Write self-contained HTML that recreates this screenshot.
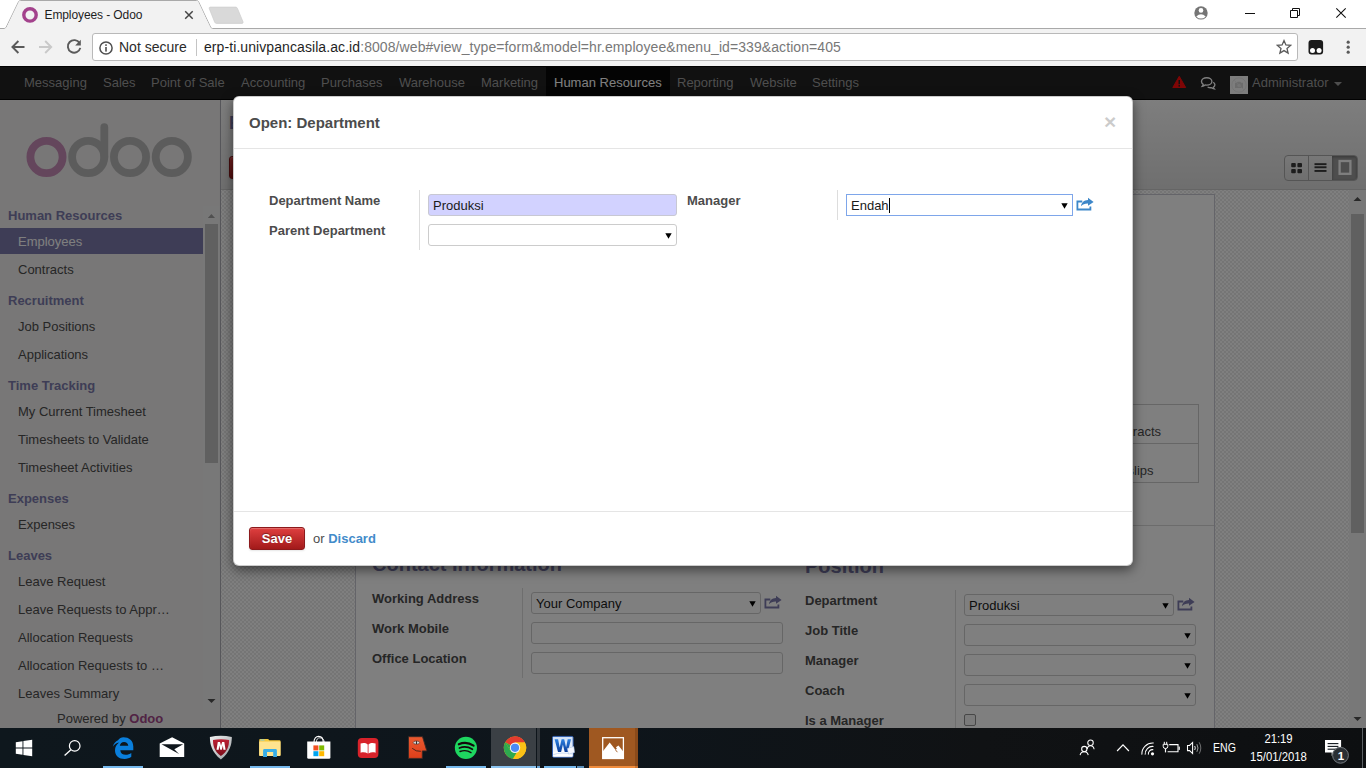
<!DOCTYPE html>
<html lang="en">
<head>
<meta charset="utf-8">
<title>Employees - Odoo</title>
<style>
*{box-sizing:border-box;margin:0;padding:0}
html,body{width:1366px;height:768px;overflow:hidden;background:#fff;font-family:"Liberation Sans",Arial,sans-serif;font-size:13px;color:#4c4c4c}
.abs,.a{position:absolute}
.nw{white-space:nowrap}
/* ---------- Chrome window ---------- */
#tabstrip{position:absolute;left:0;top:0;width:1366px;height:29px;background:#fff}
#tabstrip .line{position:absolute;left:260px;top:28px;width:1106px;height:1px;background:#a9a9a9}
#tabtitle{position:absolute;left:44.500px;top:8px;font-size:12px;line-height:14px;color:#1e1e1e;white-space:nowrap;letter-spacing:-0.1px}
#toolbar{position:absolute;left:0;top:29px;width:1366px;height:37px;background:#f2f2f2}
#omni{position:absolute;left:92px;top:4px;width:1206px;height:28px;background:#fff;border:1px solid #b9b9b9;border-radius:3px}
#omni .t{position:absolute;top:5px;font-size:14px;white-space:nowrap;line-height:16px}
/* ---------- Odoo page (origin 0,66) ---------- */
#page{position:absolute;left:0;top:66px;width:1366px;height:662px;overflow:hidden;background:#fff}
#nav{position:absolute;left:0;top:0;width:1366px;height:34px;background:#222;box-shadow:inset 0 1px 0 #050505,inset 0 -1px 0 #050505}
#nav .m{position:absolute;top:0;height:34px;line-height:33px;padding:0 8px;color:#9d9d9d;font-size:13px;white-space:nowrap}
#nav .m.on{background:#080808;color:#fff}
#side{position:absolute;left:0;top:34px;width:221px;height:628px;background:#f0eeee;border-right:1px solid #afafb6}
.h{position:absolute;left:8px;font-weight:bold;color:#7c7bad;font-size:13px;line-height:16px;white-space:nowrap}
.l{position:absolute;left:0;width:203px;height:26px;line-height:26px;padding-left:18px;color:#4c4c4c;font-size:13px;white-space:nowrap}
.l.on{background:#7c7bad;color:#fff}
#hdr{position:absolute;left:221px;top:34px;width:1145px;height:90px;background:linear-gradient(#fcfcfc,#dedede);border-bottom:1px solid #cacaca}
#sheetbg{position:absolute;left:221px;top:124px;width:1128px;height:538px;background-color:#fefefe;
 background-image:linear-gradient(45deg,#eaeaea 25%,transparent 25%,transparent 75%,#eaeaea 75%),linear-gradient(45deg,#eaeaea 25%,transparent 25%,transparent 75%,#eaeaea 75%);background-size:4px 4px;background-position:1px 1px,3px 3px}
#sheet{position:absolute;left:355px;top:128px;width:860px;height:700px;background:#fff;border:1px solid #c8c8d3}
.lbl{position:absolute;font-weight:bold;color:#4c4c4c;font-size:13px;line-height:16px;white-space:nowrap}
.inp{position:absolute;height:22px;background:#fff;border:1px solid #ccc;border-radius:3px;font-size:13px;line-height:22px;padding-left:4px;color:#1a1a1a;white-space:nowrap}
.inp .dd{position:absolute;right:4px;top:7.700px}
.vs{position:absolute;background:#ddd;width:1px}
#overlay{position:absolute;left:0;top:0;width:1366px;height:662px;background:rgba(0,0,0,.5)}
/* ---------- Modal (origin 234,97 page px) ---------- */
#modal{position:absolute;left:233px;top:30px;width:900px;height:470px;background:#fff;border:1px solid rgba(0,0,0,.2);border-radius:6px;box-shadow:0 4px 12px rgba(0,0,0,.5)}
.btn-red{position:absolute;border:1px solid #8c1a1c;border-radius:3px;background:linear-gradient(#df3f3f,#a21a1a);color:#fff;font-weight:bold;font-size:13px;line-height:21px;text-align:center;text-shadow:0 -1px 1px rgba(0,0,0,.4);box-shadow:0 1px 2px rgba(0,0,0,.1),inset 0 1px 1px rgba(255,255,255,.25)}
/* ---------- Taskbar ---------- */
#task{position:absolute;left:0;top:728px;width:1366px;height:40px;background:linear-gradient(90deg,#0e171d 0%,#0e151b 45%,#101214 72%,#0d0f11 100%);color:#fff;font-size:12px;overflow:hidden}
#task .ul{position:absolute;top:38px;height:2px;background:#76b9ed}
#task .tx{position:absolute;color:#fff;font-size:12px;line-height:14px;white-space:nowrap}
</style>
</head>
<body>
<!-- CHROME WINDOW FRAME -->
<div id="tabstrip">
  <div class="line"></div>
  <svg class="a" style="left:0;top:0" width="260" height="29" viewBox="0 0 260 29">
    <path d="M0 28.500 H4.300 Q5.600 28.400 6.200 27.200 L18.600 1.700 Q19.200 0.500 20.500 0.500 L196.600 0.500 Q197.900 0.500 198.500 1.700 L210.600 27.200 Q211.200 28.400 212.500 28.500 H260" fill="none" stroke="#a9a9a9" stroke-width="1"/>
    <path d="M5.300 29 L6.400 27.400 L18.900 1.800 Q19.300 1 20.500 1 L196.600 1 Q197.800 1 198.200 1.800 L210.400 27.400 L211.500 29Z" fill="#f2f2f2"/>
    <path d="M210.300 7.100 L235.600 7.100 Q236.900 7.100 237.400 8.300 L243 21.800 Q243.600 23.400 242 23.400 L216.600 23.400 Q215.300 23.400 214.700 22.200 L209.300 8.700 Q208.800 7.100 210.300 7.100Z" fill="#d9d9d9" stroke="#cdcdcd" stroke-width="0.700"/>
    <circle cx="30" cy="14.950" r="6.200" fill="none" stroke="#a3428c" stroke-width="3.400"/>
    <path d="M185.200 11.200 L192.700 18.700 M192.700 11.200 L185.200 18.700" stroke="#454545" stroke-width="1.500" fill="none"/>
  </svg>
  <div id="tabtitle">Employees - Odoo</div>
  <svg class="a" style="left:1180px;top:0" width="186" height="28" viewBox="1180 0 186 28">
    <circle cx="1201" cy="12.900" r="6.700" fill="#757575"/>
    <circle cx="1201" cy="10.400" r="2.300" fill="#fff"/>
    <path d="M1196.300 16.400 Q1201 12.200 1205.700 16.400 Q1203.800 18.600 1201 18.600 Q1198.200 18.600 1196.300 16.400Z" fill="#fff"/>
    <path d="M1245 13.500 H1255" stroke="#111" stroke-width="1"/>
    <path d="M1290.500 10.500 H1297.500 V17.500 H1290.500Z M1292.500 10.500 V8.500 H1299.500 V15.500 H1297.500" fill="none" stroke="#111" stroke-width="1"/>
    <path d="M1336.300 8.300 L1345.700 17.700 M1345.700 8.300 L1336.300 17.700" stroke="#111" stroke-width="1.100" fill="none"/>
  </svg>
</div>
<div id="toolbar">
  <svg class="a" style="left:0;top:0" width="93" height="37" viewBox="0 29 93 37">
    <path d="M24.500 47 H12.600 M18.400 41 L12.400 47 L18.400 53" fill="none" stroke="#5a5a5a" stroke-width="1.900"/>
    <path d="M39 47 H51 M45.200 41 L51.200 47 L45.200 53" fill="none" stroke="#c9c9c9" stroke-width="1.900"/>
    <path d="M79.600 43.200 A6.300 6.300 0 1 0 80.300 47.900" fill="none" stroke="#5a5a5a" stroke-width="1.900"/>
    <path d="M80.800 39.800 V45.400 H75.200Z" fill="#5a5a5a"/>
  </svg>
  <div id="omni">
    <svg class="a" style="left:5px;top:6px" width="16" height="16" viewBox="0 0 16 16"><circle cx="8" cy="8" r="6.100" fill="none" stroke="#4f4f4f" stroke-width="1.500"/><rect x="7.200" y="7" width="1.600" height="4.600" fill="#4f4f4f"/><rect x="7.200" y="4.300" width="1.600" height="1.600" fill="#4f4f4f"/></svg>
    <span class="t" style="left:26px;color:#2b2b2b">Not secure</span>
    <span class="a" style="left:103px;top:5px;width:1px;height:17px;background:#c4c4c4"></span>
    <span class="t" style="left:111px;color:#1f1f1f;letter-spacing:.08px">erp-ti.univpancasila.ac.id<span style="color:#787878">:8008/web#view_type=form&amp;model=hr.employee&amp;menu_id=339&amp;action=405</span></span>
    <svg class="a" style="left:1183px;top:5px" width="16" height="16" viewBox="0 0 16 16"><path d="M8 1.600 L9.900 6 L14.600 6.400 L11 9.500 L12.100 14.100 L8 11.600 L3.900 14.100 L5 9.500 L1.400 6.400 L6.100 6Z" fill="none" stroke="#5a5a5a" stroke-width="1.300" stroke-linejoin="miter"/></svg>
  </div>
  <svg class="a" style="left:1300px;top:0" width="66" height="37" viewBox="1300 29 66 37">
    <rect x="1308.500" y="40" width="14.600" height="14.400" rx="3" fill="#1b1b1b"/>
    <circle cx="1312.500" cy="50.600" r="2.500" fill="#fff"/><circle cx="1319.100" cy="50.600" r="2.500" fill="#fff"/>
    <circle cx="1348.200" cy="42.200" r="1.600" fill="#5a5a5a"/><circle cx="1348.200" cy="47.200" r="1.600" fill="#5a5a5a"/><circle cx="1348.200" cy="52.200" r="1.600" fill="#5a5a5a"/>
  </svg>
</div>

<!-- ODOO PAGE -->
<div id="page">
  <div id="nav"><span class="m" style="left:16px">Messaging</span><span class="m" style="left:95px">Sales</span><span class="m" style="left:143px">Point of Sale</span><span class="m" style="left:233px">Accounting</span><span class="m" style="left:313px">Purchases</span><span class="m" style="left:391px">Warehouse</span><span class="m" style="left:473px">Marketing</span><span class="m on" style="left:546px">Human Resources</span><span class="m" style="left:669px">Reporting</span><span class="m" style="left:742px">Website</span><span class="m" style="left:804px">Settings</span><svg class="a" style="left:1170px;top:8px" width="50" height="20" viewBox="1170 74 50 20">
  <path d="M1179.250 76.300 L1185.700 87.500 H1172.800Z" fill="#ff0a0a" stroke="#ff0a0a" stroke-width="1" stroke-linejoin="round"/>
  <rect x="1178.500" y="80" width="1.500" height="4.200" fill="#222"/><rect x="1178.500" y="85.100" width="1.500" height="1.500" fill="#222"/>
  <path d="M1206.700 77.700 C1209.700 77.700 1211.900 79.300 1211.900 81.400 C1211.900 83.500 1209.700 85.100 1206.700 85.100 C1206.100 85.100 1205.600 85.050 1205.100 84.950 C1204.300 85.700 1203.300 86.200 1202.300 86.300 C1202.800 85.700 1203.100 85.100 1203.200 84.300 C1202.100 83.600 1201.500 82.600 1201.500 81.400 C1201.500 79.300 1203.700 77.700 1206.700 77.700Z" fill="none" stroke="#fff" stroke-width="1.350"/>
  <path d="M1213.300 82.300 C1214.300 83 1214.900 83.800 1214.900 84.800 C1214.900 85.800 1214.300 86.700 1213.300 87.300 C1213.400 87.900 1213.700 88.400 1214.100 88.800 C1213.100 88.700 1212.200 88.300 1211.500 87.700 C1210 87.900 1208.600 87.600 1207.600 87" fill="none" stroke="#fff" stroke-width="1.350"/>
</svg>
<div class="a" style="left:1230px;top:10px;width:18px;height:18px;background:#fbfbfb"><svg width="18" height="18" viewBox="0 0 18 18"><circle cx="9" cy="9" r="7.200" fill="none" stroke="#e4e4e4" stroke-width="0.800"/><path d="M5 6.800 H6.800 L7.600 5.800 H10.400 L11.200 6.800 H13 V12 H5Z" fill="#d9d9d9"/><circle cx="9" cy="9.300" r="1.600" fill="#ececec"/><path d="M4.200 4.200 L13.800 13.800" stroke="#e9e9e9" stroke-width="0.800"/></svg></div>
<span class="m" style="left:1244px">Administrator</span>
<svg class="a" style="left:1333px;top:15px" width="10" height="6" viewBox="0 0 10 6"><path d="M1 1 H9 L5 5Z" fill="#9d9d9d"/></svg>
</div>
  <div id="side">
    <svg class="a" style="left:20px;top:18px" width="180" height="66" viewBox="20 118 180 66">
  <circle cx="46.500" cy="157" r="16.100" fill="none" stroke="#c98db9" stroke-width="7.800"/>
  <circle cx="88.200" cy="157" r="16.100" fill="none" stroke="#b9b9b9" stroke-width="7.800"/>
  <path d="M104.300 157 L104.300 127.200" stroke="#b9b9b9" stroke-width="7.800" stroke-linecap="round" fill="none"/>
  <circle cx="130" cy="157" r="16.100" fill="none" stroke="#b9b9b9" stroke-width="7.800"/>
  <circle cx="171.800" cy="157" r="16.100" fill="none" stroke="#b9b9b9" stroke-width="7.800"/>
</svg>
    <div class="h" style="top:108px">Human Resources</div>
    <div class="h" style="top:193px">Recruitment</div>
    <div class="h" style="top:278px">Time Tracking</div>
    <div class="h" style="top:391px">Expenses</div>
    <div class="h" style="top:448px">Leaves</div>
    <div class="l on" style="top:128px;line-height:28px">Employees</div>
    <div class="l" style="top:157px">Contracts</div>
    <div class="l" style="top:214px">Job Positions</div>
    <div class="l" style="top:242px">Applications</div>
    <div class="l" style="top:299px">My Current Timesheet</div>
    <div class="l" style="top:327px">Timesheets to Validate</div>
    <div class="l" style="top:355px">Timesheet Activities</div>
    <div class="l" style="top:412px">Expenses</div>
    <div class="l" style="top:469px">Leave Request</div>
    <div class="l" style="top:497px">Leave Requests to Appr…</div>
    <div class="l" style="top:525px">Allocation Requests</div>
    <div class="l" style="top:553px">Allocation Requests to …</div>
    <div class="l" style="top:581px">Leaves Summary</div>
    <div class="a nw" style="left:57px;top:611px;font-size:13px;line-height:16px;color:#4c4c4c">Powered by <span style="color:#a24689;font-weight:bold">Odoo</span></div>
    <div class="a" style="left:203px;top:106px;width:17px;height:504px;background:#f1f1f1;"></div>
    <div class="a" style="left:205px;top:124px;width:13px;height:239px;background:#c1c1c1;"></div>
    <svg class="a" style="left:203px;top:106px" width="17" height="17" viewBox="0 0 17 17"><path d="M4.800 12 L8.400 8 L12 12Z" fill="#a0a0a0"/></svg>
    <svg class="a" style="left:203px;top:593px" width="17" height="17" viewBox="0 0 17 17"><path d="M4.500 6 L8.500 10 L12.500 6Z" fill="#505050"/></svg>
  </div>
  <div id="hdr">
    <div class="a nw" style="left:8px;top:12px;font-size:18px;font-weight:bold;line-height:22px;color:#4c4c4c"><span style="color:#7c7bad">Employees</span> / Endah</div>
    <div class="btn-red" style="left:8px;top:56px;width:46px;height:23px">Save</div>
    <div class="a" style="left:1063px;top:55px;width:74px;height:26px;border:1px solid #ababab;border-radius:4px;background:linear-gradient(#f0f0f0,#dedede);overflow:hidden">
  <div class="a" style="left:23px;top:0;width:1px;height:24px;background:#ababab"></div>
  <div class="a" style="left:47px;top:0;width:25px;height:24px;background:#9c9c9c;box-shadow:inset 0 1px 3px rgba(0,0,0,.3)"></div>
  <svg class="a" style="left:0;top:0" width="72" height="24" viewBox="1285 156 72 24">
    <g fill="#3a3a3a"><rect x="1291.200" y="163" width="4.600" height="4.300" rx="1"/><rect x="1297.400" y="163" width="4.600" height="4.300" rx="1"/><rect x="1291.200" y="169" width="4.600" height="4.300" rx="1"/><rect x="1297.400" y="169" width="4.600" height="4.300" rx="1"/>
    <rect x="1314.500" y="163.200" width="12" height="1.900"/><rect x="1314.500" y="166.300" width="12" height="1.900"/><rect x="1314.500" y="170" width="12" height="1.900"/></g>
    <rect x="1339.600" y="161" width="10.800" height="12.800" fill="none" stroke="#fff" stroke-width="2.300"/>
  </svg>
</div>
  </div>
  <div id="sheetbg"></div>
  <div class="a" style="left:1349px;top:124px;width:17px;height:538px;background:#f1f1f1;"></div>
  <div class="a" style="left:1351px;top:148px;width:13px;height:319px;background:#c1c1c1;"></div>
  <svg class="a" style="left:1349px;top:124px" width="17" height="17" viewBox="0 0 17 17"><path d="M4.500 11 L8.500 7 L12.500 11Z" fill="#505050"/></svg>
  <svg class="a" style="left:1349px;top:645px" width="17" height="17" viewBox="0 0 17 17"><path d="M4.500 6 L8.500 10 L12.500 6Z" fill="#505050"/></svg>
  <div id="sheet">
    <div class="a" style="left:693px;top:209px;width:150px;height:79px;border:1px solid #ccc"></div>
    <div class="a" style="left:693px;top:248px;width:150px;height:1px;background:#ccc;"></div>
    <div class="a nw" style="left:693px;top:229px;width:112px;text-align:right;font-size:13px;line-height:16px;color:#4c4c4c">0 Contracts</div>
    <div class="a nw" style="left:693px;top:268px;width:104.500px;text-align:right;font-size:13px;line-height:16px;color:#4c4c4c">0 Payslips</div>
    <div class="a" style="left:0px;top:330px;width:858px;height:1px;background:#d9d9d9;"></div>
    <div class="a nw" style="left:16px;top:357px;font-size:20px;font-weight:bold;line-height:24px;color:#7c7bad">Contact Information</div>
    <div class="a nw" style="left:449px;top:359px;font-size:20px;font-weight:bold;line-height:24px;color:#7c7bad">Position</div>
    <div class="lbl" style="left:16px;top:396px">Working Address</div>
    <div class="lbl" style="left:16px;top:426px">Work Mobile</div>
    <div class="lbl" style="left:16px;top:456px">Office Location</div>
    <div class="a" style="left:166px;top:393px;width:1px;height:90px;background:#ddd;"></div>
    <div class="inp" style="left:175px;top:397px;width:230px;">Your Company<svg class="dd" width="7" height="6" viewBox="0 0 7 6"><path d="M0.300 0.200 H6.700 L3.500 5.800Z" fill="#000"/></svg></div>
    <svg class="a" style="left:407.5px;top:400.1px" width="18" height="14" viewBox="0 0 18 14"><path d="M12 0.800 L17.600 4.900 L12 8.700 V6.500 C9 6.400 6.800 7.300 5 9.200 C5.500 5.600 8 3.300 12 3.100Z" fill="#7c7bad"/><path d="M6.300 4.500 H1.400 V12.500 H14.400 V9.400" fill="none" stroke="#7c7bad" stroke-width="1.800"/></svg>
    <div class="inp" style="left:175px;top:427px;width:252px;"></div>
    <div class="inp" style="left:175px;top:457px;width:252px;"></div>
    <div class="lbl" style="left:449px;top:398px">Department</div>
    <div class="lbl" style="left:449px;top:428px">Job Title</div>
    <div class="lbl" style="left:449px;top:458px">Manager</div>
    <div class="lbl" style="left:449px;top:488px">Coach</div>
    <div class="lbl" style="left:449px;top:518px">Is a Manager</div>
    <div class="a" style="left:599px;top:395px;width:1px;height:150px;background:#ddd;"></div>
    <div class="inp" style="left:608px;top:399px;width:210px;">Produksi<svg class="dd" width="7" height="6" viewBox="0 0 7 6"><path d="M0.300 0.200 H6.700 L3.500 5.800Z" fill="#000"/></svg></div>
    <svg class="a" style="left:820.5px;top:402.1px" width="18" height="14" viewBox="0 0 18 14"><path d="M12 0.800 L17.600 4.900 L12 8.700 V6.500 C9 6.400 6.800 7.300 5 9.200 C5.500 5.600 8 3.300 12 3.100Z" fill="#7c7bad"/><path d="M6.300 4.500 H1.400 V12.500 H14.400 V9.400" fill="none" stroke="#7c7bad" stroke-width="1.800"/></svg>
    <div class="inp" style="left:608px;top:429px;width:232px;"><svg class="dd" width="7" height="6" viewBox="0 0 7 6"><path d="M0.300 0.200 H6.700 L3.500 5.800Z" fill="#000"/></svg></div>
    <div class="inp" style="left:608px;top:459px;width:232px;"><svg class="dd" width="7" height="6" viewBox="0 0 7 6"><path d="M0.300 0.200 H6.700 L3.500 5.800Z" fill="#000"/></svg></div>
    <div class="inp" style="left:608px;top:489px;width:232px;"><svg class="dd" width="7" height="6" viewBox="0 0 7 6"><path d="M0.300 0.200 H6.700 L3.500 5.800Z" fill="#000"/></svg></div>
    <div class="a" style="left:608px;top:519px;width:12px;height:12px;border:1px solid #8f8f8f;border-radius:2px;background:#f4f4f4"></div>
  </div>
  <div id="overlay"></div>
  <div id="modal">
    <div class="a nw" style="left:15px;top:17px;font-size:15px;font-weight:bold;line-height:18px;color:#4c4c4c">Open: Department</div>
    <div class="a" style="left:870px;top:14px;font-size:21px;font-weight:bold;line-height:21px;color:#000;opacity:.2">×</div>
    <div class="a" style="left:0px;top:51px;width:898px;height:1px;background:#e5e5e5;"></div>
    <div class="lbl" style="left:35px;top:96px">Department Name</div>
    <div class="lbl" style="left:35px;top:126px">Parent Department</div>
    <div class="lbl" style="left:453px;top:96px">Manager</div>
    <div class="a" style="left:185px;top:93px;width:1px;height:60px;background:#ddd;"></div>
    <div class="a" style="left:603px;top:93px;width:1px;height:30px;background:#ddd;"></div>
    <div class="inp" style="left:194px;top:97px;width:249px;background:#d2d2ff;border-color:#c8c8d3">Produksi</div>
    <div class="inp" style="left:194px;top:127px;width:249px;"><svg class="dd" width="7" height="6" viewBox="0 0 7 6"><path d="M0.300 0.200 H6.700 L3.500 5.800Z" fill="#000"/></svg></div>
    <div class="inp" style="left:612px;top:97px;width:227px;border-color:#7ea6ea;border-radius:0">Endah<span style="display:inline-block;width:1px;height:15px;background:#000;vertical-align:-3px"></span><svg class="dd" width="7" height="6" viewBox="0 0 7 6"><path d="M0.300 0.200 H6.700 L3.500 5.800Z" fill="#000"/></svg></div>
    <svg class="a" style="left:841.5px;top:100.1px" width="18" height="14" viewBox="0 0 18 14"><path d="M12 0.800 L17.600 4.900 L12 8.700 V6.500 C9 6.400 6.800 7.300 5 9.200 C5.500 5.600 8 3.300 12 3.100Z" fill="#3d87c9"/><path d="M6.300 4.500 H1.400 V12.500 H14.400 V9.400" fill="none" stroke="#3d87c9" stroke-width="1.800"/></svg>
    <div class="a" style="left:0px;top:414px;width:898px;height:1px;background:#e5e5e5;"></div>
    <div class="btn-red" style="left:15px;top:430px;width:56px;height:23px">Save</div>
    <div class="a nw" style="left:79px;top:434px;font-size:13px;line-height:16px;color:#4c4c4c">or <span style="color:#428bca;font-weight:bold">Discard</span></div>
  </div>
</div>

<!-- WINDOWS TASKBAR -->
<div id="task">
  <div class="a" style="left:491px;top:0px;width:45px;height:40px;background:#3b4045;"></div>
  <div class="a" style="left:537px;top:0px;width:3px;height:40px;background:#33383d;"></div>
  <div class="a" style="left:589px;top:0px;width:45.5px;height:40px;background:#9f5821;"></div>
  <div class="a" style="left:635px;top:0px;width:2.5px;height:40px;background:#8a4a1a;"></div>
  <div class="a" style="left:103px;top:38px;width:40px;height:2px;background:#76b9ed;"></div>
  <div class="a" style="left:250px;top:38px;width:40px;height:2px;background:#76b9ed;"></div>
  <div class="a" style="left:446px;top:38px;width:40px;height:2px;background:#76b9ed;"></div>
  <div class="a" style="left:491px;top:38px;width:45px;height:2px;background:#8cc4f0;"></div>
  <div class="a" style="left:537px;top:38px;width:3px;height:2px;background:#6aa6d6;"></div>
  <div class="a" style="left:544px;top:38px;width:31.5px;height:2px;background:#76b9ed;"></div>
  <div class="a" style="left:577px;top:38px;width:7px;height:2px;background:#5a8fba;"></div>
  <div class="a" style="left:589px;top:38px;width:45.5px;height:2px;background:#f08c3c;"></div>
  <div class="a" style="left:635px;top:38px;width:2.5px;height:2px;background:#c97430;"></div>
  <svg class="a" style="left:15px;top:11px" width="18" height="18" viewBox="0 0 18 18"><path d="M0.800 3.200 L7.500 2.250 V8.500 H0.800Z M8.400 2.100 L17.200 0.800 V8.500 H8.400Z M0.800 9.400 H7.500 V15.750 L0.800 14.800Z M8.400 9.400 H17.200 V17.200 L8.400 15.900Z" fill="#fff"/></svg>
  <svg class="a" style="left:62px;top:10px" width="22" height="20" viewBox="0 0 22 20"><circle cx="12.700" cy="7.900" r="5.300" fill="none" stroke="#fff" stroke-width="1.200"/><path d="M8.900 11.800 L2.600 17.500" stroke="#fff" stroke-width="1.300" fill="none"/></svg>
  <svg class="a" style="left:111px;top:8px" width="24" height="24" viewBox="0 0 24 24"><path d="M1.800 10.800 C2.600 7.600 4.600 5.200 7 4.200 C8.400 2.400 10.200 1.200 12.400 1.200 C18.200 1.200 22.300 4.600 22.300 10.400 V14.200 H9.300 C9.500 17.200 11.600 18.800 14.800 18.800 C16.800 18.800 18.800 18.100 20.300 17 V20.800 C18.600 22.200 16.200 22.900 13.600 22.900 C8 22.900 4 19.600 4 14.400 C4 11.400 5.400 8.600 8 6.600 C5.200 7.200 3.200 8.600 1.800 10.800Z M8.800 9.700 H17.300 C17.100 7.400 15.400 5.900 13 5.900 C10.800 5.900 9.200 7.400 8.800 9.700Z" fill="#0a7fdc" fill-rule="evenodd"/></svg>
  <svg class="a" style="left:159px;top:9px" width="26" height="21" viewBox="0 0 26 21"><path d="M0.700 6.500 L13.100 0.300 L25.200 6.500 V20.100 H0.700Z" fill="#fff"/><path d="M2.500 7.300 H24.200 L15.300 12.200 L20 16.900Z" fill="#0f161c"/></svg>
  <svg class="a" style="left:208px;top:7px" width="26" height="26" viewBox="0 0 26 26"><defs><linearGradient id="mcr" x1="0" y1="0" x2="0" y2="1"><stop offset="0" stop-color="#bd2034"/><stop offset="1" stop-color="#7a0d1a"/></linearGradient><linearGradient id="mcs" x1="0" y1="0" x2="1" y2="1"><stop offset="0" stop-color="#f2f2f2"/><stop offset="1" stop-color="#9a9ea2"/></linearGradient></defs><path d="M1.900 2 Q12.900 -0.300 23.800 2 C23.900 9 22.300 17 12.900 24.600 C3.500 17 1.900 9 1.900 2Z" fill="url(#mcs)"/><path d="M5 4.900 Q12.900 3.600 21.100 4.900 C21.100 10.500 19.500 16.500 12.900 21 C6.500 16.500 4.900 10.500 5 4.900Z" fill="url(#mcr)"/><path d="M8.500 14.800 L9.800 7 H12 L13.050 10.800 L14.100 7 H16.300 L17.600 14.800 H15.400 L14.900 10.400 L13.800 14.800 H12.300 L11.200 10.400 L10.700 14.800Z" fill="#fff"/></svg>
  <svg class="a" style="left:258px;top:9px" width="24" height="21" viewBox="0 0 24 21"><path d="M1.200 3 Q1.200 1.900 2.300 1.900 H9.600 Q10.400 1.900 10.800 2.600 L11.200 3.200 H21.500 Q22.500 3.200 22.500 4.200 V18 Q22.500 19 21.500 19 H2.200 Q1.200 19 1.200 18Z" fill="#f6c93a"/><path d="M1.200 4.600 H22.500 V18 Q22.500 19 21.500 19 H2.200 Q1.200 19 1.200 18Z" fill="#ffe48f"/><rect x="2.300" y="2.600" width="4.200" height="1" rx=".3" fill="#7fd0e8"/><path d="M5.100 20 V13.400 Q5.100 12 6.500 12 H17.500 Q18.900 12 18.900 13.400 V20 H15.200 V15 H9 V20Z" fill="#38aee8"/></svg>
  <svg class="a" style="left:306px;top:7px" width="26" height="26" viewBox="0 0 26 26"><path d="M8 7 C8 3.400 10 1.400 12.600 1.400 C15.200 1.400 17.200 3.400 17.200 7" fill="none" stroke="#fff" stroke-width="1.100"/><path d="M10.400 7 C10.400 4.600 11.600 2.800 13.800 2.800 C16 2.800 17.900 4.200 18.300 7" fill="none" stroke="#fff" stroke-width="1" opacity=".85"/><path d="M1.200 6.600 H24.400 V22.400 Q24.400 23.800 23 23.800 H2.600 Q1.200 23.800 1.200 22.400Z" fill="#fff"/><rect x="7.400" y="10.400" width="5" height="5" fill="#f25022"/><rect x="13.200" y="10.400" width="5" height="5" fill="#7fba00"/><rect x="7.400" y="16.200" width="5" height="5" fill="#00a4ef"/><rect x="13.200" y="16.200" width="5" height="5" fill="#ffb900"/></svg>
  <svg class="a" style="left:357px;top:9px" width="22" height="22" viewBox="0 0 22 22"><rect x="0.800" y="1" width="20.600" height="20" rx="4" fill="#d8222a"/><path d="M3.600 6.600 C6 5.600 8.600 5.800 10.700 7.400 V16.600 C8.600 15.200 6 15 3.600 15.800Z M18.600 6.600 C16.200 5.600 13.600 5.800 11.500 7.400 V16.600 C13.600 15.200 16.200 15 18.600 15.800Z" fill="#fff"/></svg>
  <svg class="a" style="left:406px;top:7px" width="23" height="26" viewBox="0 0 23 26"><defs><linearGradient id="ofg" x1="0" y1="0" x2="0" y2="1"><stop offset="0" stop-color="#ea5a30"/><stop offset="1" stop-color="#de3f1a"/></linearGradient></defs><path d="M2.500 1.700 H16.500 L20.800 15.900 H16.300 V23.400 H2.500Z" fill="url(#ofg)" stroke="#3b2a26" stroke-width="0.900" stroke-linejoin="miter"/><ellipse cx="10.400" cy="7.600" rx="3.200" ry="1.600" fill="#d4d4d4" stroke="#2a1a16" stroke-width="0.500"/><rect x="10" y="6.100" width="0.900" height="3" fill="#2a1a16"/><path d="M6.200 13.300 Q10 16.800 14.800 16.300" fill="none" stroke="#3b1f18" stroke-width="0.900"/></svg>
  <svg class="a" style="left:454px;top:8px" width="24" height="24" viewBox="0 0 24 24"><circle cx="11.900" cy="11.900" r="11.050" fill="#1ed760"/><path d="M4.800 8.300 Q12.300 5 19.600 9.600" fill="none" stroke="#15080c" stroke-width="2.100" stroke-linecap="round"/><path d="M5.400 12 Q12 9.400 18.400 13.300" fill="none" stroke="#15080c" stroke-width="1.700" stroke-linecap="round"/><path d="M6 15.500 Q12 13.300 17 16.600" fill="none" stroke="#15080c" stroke-width="1.400" stroke-linecap="round"/></svg>
  <svg class="a" style="left:503px;top:8px" width="24" height="24" viewBox="0 0 24 24"><circle cx="12" cy="11.800" r="11.200" fill="#fbc116"/><path d="M12 11.800 L2.300 6.200 A11.200 11.200 0 0 1 21.700 6.200Z" fill="#e33b2e"/><path d="M12 0.600 A11.200 11.200 0 0 1 21.700 6.200 H12Z" fill="#e33b2e"/><path d="M2.300 6.200 A11.200 11.200 0 0 0 10 22.800 L14.800 14.600 L7.200 14.600Z" fill="#2da94f"/><path d="M2.300 6.200 L7.600 15.200 L12 11.800Z" fill="#2da94f"/><path d="M21.700 6.200 H12 L16.600 14.400 L10 22.800 A11.200 11.200 0 0 0 21.700 6.200Z" fill="#fbc116"/><circle cx="12" cy="11.800" r="5.200" fill="#f1f1f1"/><circle cx="12" cy="11.800" r="4.100" fill="#4a8af4"/></svg>
  <svg class="a" style="left:551px;top:7px" width="24" height="24" viewBox="0 0 24 24"><defs><linearGradient id="wdb" x1="0" y1="0" x2="0" y2="1"><stop offset="0" stop-color="#cfe0f7"/><stop offset=".55" stop-color="#e9f1fc"/><stop offset="1" stop-color="#ffffff"/></linearGradient><linearGradient id="wdw" x1="0" y1="0" x2="0" y2="1"><stop offset="0" stop-color="#2a7fe0"/><stop offset="1" stop-color="#0b3d98"/></linearGradient></defs><rect x="1.500" y="1.400" width="20.600" height="20.800" rx="1.200" fill="url(#wdb)" stroke="#2b5cb3" stroke-width="0.900"/><path d="M2.200 17.600 Q8 14.400 21.600 16.400 V21.600 H2.200Z" fill="#fff"/><path d="M2.400 19.600 Q10 16.800 21.400 19" fill="none" stroke="#bcd3f2" stroke-width="0.800"/><path d="M3.600 4.300 H7.100 L8.700 12.400 L10.600 4.300 H13.200 L15.100 12.400 L16.700 4.300 H20 L16.800 17 H13.700 L11.900 9.600 L10.100 17 H7Z" fill="url(#wdw)"/><path d="M16.300 13.400 L22.800 11.600 L23.600 17.400 L17.600 19.200Z" fill="#f4f8fe" stroke="#a9c0e6" stroke-width="0.500"/></svg>
  <svg class="a" style="left:601px;top:8px" width="24" height="24" viewBox="0 0 24 24"><rect x="1.700" y="1.700" width="20.700" height="20.800" fill="none" stroke="#fff" stroke-width="1.300"/><path d="M1.700 15.400 L8.700 6.400 L14.600 14 L15.900 12.400 L14.900 11.200 L17.500 9.400 L22.400 15.800 V22.500 H1.700Z" fill="#fff"/><path d="M14.600 14 L16.400 16.200" stroke="#9f5821" stroke-width="0.900" fill="none"/></svg>
  <svg class="a" style="left:1076px;top:8px" width="24" height="24" viewBox="0 0 24 24"><g fill="none" stroke="#fff" stroke-width="1.050"><circle cx="14.500" cy="6.800" r="2.750"/><path d="M11.300 13 Q11.600 9.700 14.500 9.700 Q17.600 9.700 18.100 13.200"/><circle cx="8.300" cy="13" r="2.650"/><path d="M4.100 19.200 Q4.600 15.800 8.300 15.800 Q11.700 15.800 12.200 19.200"/></g></svg>
  <svg class="a" style="left:1115px;top:13px" width="16" height="12" viewBox="0 0 16 12"><path d="M2.100 10 L8 3.900 L13.900 10" fill="none" stroke="#fff" stroke-width="1.200"/></svg>
  <svg class="a" style="left:1139px;top:12px" width="18" height="18" viewBox="0 0 18 18"><g fill="none" stroke="#fff" stroke-width="1.050"><path d="M2.900 14.600 A10.800 10.800 0 0 1 14.700 3.050"/><path d="M6.200 14.600 A7.400 7.400 0 0 1 14.500 6.450" /><path d="M9.400 14.600 A4.200 4.200 0 0 1 14.300 9.700"/></g><circle cx="13.500" cy="13.800" r="1.600" fill="#fff"/></svg>
  <svg class="a" style="left:1161px;top:12px" width="22" height="16" viewBox="0 0 22 16"><path d="M8.200 4.600 H17 V11.800 H6.600" fill="none" stroke="#fff" stroke-width="1.100"/><rect x="17.600" y="6.600" width="1.200" height="3.300" fill="#fff"/><path d="M3.300 1.800 V4.200 M5.700 1.800 V4.200" stroke="#fff" stroke-width="1" fill="none"/><path d="M2.200 4.300 H6.800 V6.300 Q6.800 8.600 4.500 8.600 Q2.200 8.600 2.200 6.300Z" fill="none" stroke="#fff" stroke-width="1"/><path d="M4.500 8.600 V12.400" stroke="#fff" stroke-width="1.200" fill="none"/></svg>
  <svg class="a" style="left:1185px;top:11px" width="20" height="18" viewBox="0 0 20 18"><path d="M2.500 6.400 H4.600 L7.600 3.400 V14.600 L4.600 11.600 H2.500Z" fill="none" stroke="#fff" stroke-width="1.050"/><path d="M9.700 7 Q10.900 9 9.700 11" fill="none" stroke="#fff" stroke-width="1" opacity=".9"/><path d="M11.900 5.200 Q14.100 9 11.900 12.800" fill="none" stroke="#fff" stroke-width="1" opacity=".6"/><path d="M14.200 3.300 Q17.400 9 14.200 14.700" fill="none" stroke="#fff" stroke-width="1" opacity=".4"/></svg>
  <div class="tx" style="left:1213px;top:12.5px;transform:scaleX(.88);transform-origin:0 0">ENG</div>
  <div class="tx" style="left:1247.5px;top:3.5px;width:61px;text-align:center;transform:scaleX(.94)">21:19</div>
  <div class="tx" style="left:1247.8px;top:21.5px;width:61px;text-align:center;transform:scaleX(.945)">15/01/2018</div>
  <svg class="a" style="left:1322px;top:10px" width="30" height="28" viewBox="0 0 30 28"><path d="M3 2 H19.100 V14.600 H12.600 L9.700 18 V14.600 H3Z" fill="#fff"/><g stroke="#0f161c" stroke-width="1.100"><path d="M5.600 5.600 H16.400"/><path d="M5.600 8.400 H16.400"/><path d="M5.600 11.200 H14"/></g><circle cx="18.500" cy="17.300" r="8.300" fill="#2a2f34" stroke="#0f161c" stroke-width="0"/><circle cx="18.500" cy="17.300" r="7.900" fill="none" stroke="#70757a" stroke-width="1"/></svg>
  <div class="tx" style="left:1336.5px;top:20.5px;font-size:11.500px;font-weight:bold;line-height:14px;width:9px;text-align:center">1</div>
  <div class="a" style="left:1362px;top:0px;width:1px;height:40px;background:#5a5f63;"></div>
</div>
</body>
</html>
